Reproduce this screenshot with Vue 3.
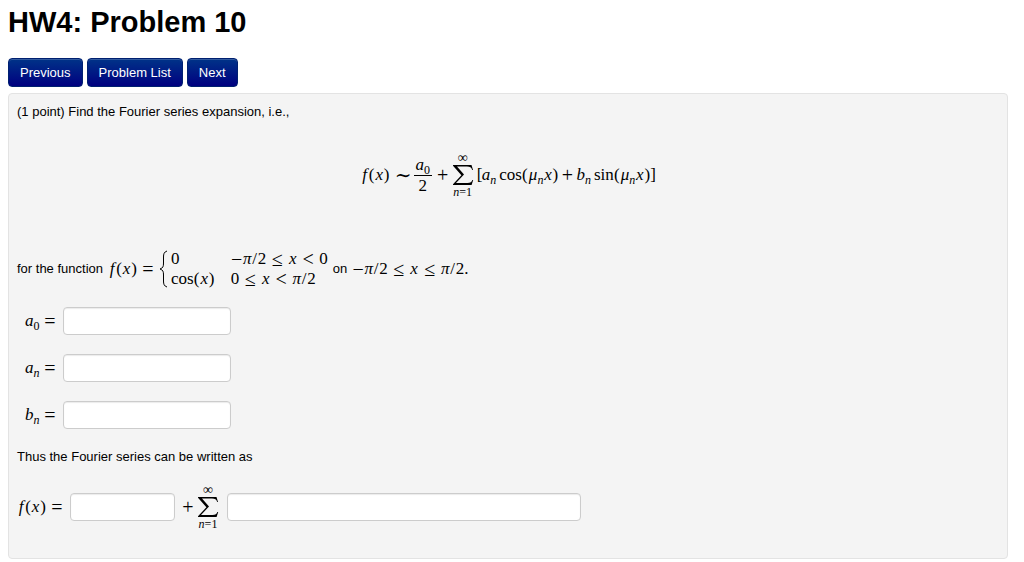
<script setup>
import { ref } from 'vue'

const coefficients = [
  { id: 'a0', letter: 'a', index: '0', variable: false },
  { id: 'an', letter: 'a', index: 'n', variable: true },
  { id: 'bn', letter: 'b', index: 'n', variable: true }
]
const answers = ref({ a0: '', an: '', bn: '', constant: '', terms: '' })
</script>

<template>
  <main class="page">
    <h1>HW4: Problem 10</h1>

    <nav class="buttons" aria-label="Problem navigation">
      <button type="button">Previous</button>
      <button type="button">Problem List</button>
      <button type="button">Next</button>
    </nav>

    <form class="panel" @submit.prevent>
      <p>(1 point) Find the Fourier series expansion, i.e.,</p>

      <div class="math display">
        <i class="f">f</i><span class="par">(</span><i class="x">x</i><span class="par">)</span>
        <span class="op rel">∼</span>
        <span class="frac"><span><i>a</i><sub>0</sub></span><span class="den">2</span></span>
        <span class="op bin">+</span>
        <span class="sum">
          <span class="limit inf">∞</span>
          <svg viewBox="0 0 22 22" aria-label="sum"><path d="M1 1H19.5L21 6H20.2C19.4 3.4 18 2.5 15 2.5H5L12 10.5L4 19H15.5C18.4 19 19.8 18 20.4 16H21.2L19.6 21H1V20.2L9.4 11.3L1 1.8Z" /></svg>
          <span class="limit"><i>n</i>=1</span>
        </span>
        <span class="bracket open">[</span><i class="var">a<sub>n</sub></i>
        <span class="fn">cos</span><span class="par">(</span><i class="mu">μ<sub>n</sub></i><i class="x">x</i><span class="par">)</span>
        <span class="op bin">+</span>
        <i class="var">b<sub>n</sub></i>
        <span class="fn">sin</span><span class="par">(</span><i class="mu">μ<sub>n</sub></i><i class="x">x</i><span class="par">)</span><span class="bracket">]</span>
      </div>

      <div class="line definition">
        <span>for the function</span>
        <span class="math">
          <i class="f">f</i><span class="par">(</span><i class="x">x</i><span class="par">)</span>
          <span class="op rel">=</span>
          <svg class="brace" viewBox="0 0 9 38" aria-label="cases"><path d="M8 1C5 2 4.5 4 4.5 7V13C4.5 16.5 4 18 1 19C4 20 4.5 21.5 4.5 25V31C4.5 34 5 36 8 37" /></svg>
          <span class="cases">
            <span class="math">0</span>
            <span class="math">
              <span class="op">−</span><i class="x">π</i><span class="slash">/</span>2<span class="op rel">≤</span><i class="x">x</i><span class="op rel">&lt;</span>0
            </span>
            <span class="math">cos<span class="par">(</span><i class="x">x</i><span class="par">)</span></span>
            <span class="math">
              0<span class="op rel">≤</span><i class="x">x</i><span class="op rel">&lt;</span><i class="x">π</i><span class="slash">/</span>2
            </span>
          </span>
        </span>
        <span class="on">on</span>
        <span class="math">
          <span class="op">−</span><i class="x">π</i><span class="slash">/</span>2<span class="op rel">≤</span><i class="x">x</i><span class="op rel">≤</span><i class="x">π</i><span class="slash">/</span>2.
        </span>
      </div>

      <div class="answers">
        <div v-for="c in coefficients" :key="c.id" class="answer">
          <label class="math" :for="c.id">
            <span class="name"><i>{{ c.letter }}</i><sub><i v-if="c.variable">{{ c.index }}</i><template v-else>{{ c.index }}</template></sub></span>
            <span class="op rel">=</span>
          </label>
          <input :id="c.id" v-model="answers[c.id]" type="text" />
        </div>
      </div>

      <p>Thus the Fourier series can be written as</p>

      <div class="series">
        <label class="math" for="constant">
          <i class="f">f</i><span class="par">(</span><i class="x">x</i><span class="par">)</span><span class="op rel">=</span>
        </label>
        <input id="constant" v-model="answers.constant" class="constant" type="text" />
        <label class="math series-sum" for="terms">
          <span class="op bin">+</span>
          <span class="sum">
            <span class="limit inf">∞</span>
            <svg viewBox="0 0 22 22" aria-label="sum"><path d="M1 1H19.5L21 6H20.2C19.4 3.4 18 2.5 15 2.5H5L12 10.5L4 19H15.5C18.4 19 19.8 18 20.4 16H21.2L19.6 21H1V20.2L9.4 11.3L1 1.8Z" /></svg>
            <span class="limit"><i>n</i>=1</span>
          </span>
        </label>
        <input id="terms" v-model="answers.terms" class="terms" type="text" />
      </div>
    </form>
  </main>
</template>

<style>
body {
  background: #fff;
}
</style>

<style scoped>
.page {
  padding: 2px 16px 0 8px;
  font: 13px/20px "Liberation Sans", Arial, sans-serif;
  color: #000;
}

h1 {
  margin: 0 0 16px;
  font-size: 29px;
  line-height: 40px;
}

.buttons {
  display: flex;
  gap: 4px;
  margin-bottom: 6px;
}

button {
  padding: 3px 11px;
  border: 1px solid #002070;
  border-radius: 4px;
  background: linear-gradient(#003388, #000080);
  box-shadow: inset 0 1px 0 rgba(255, 255, 255, 0.2);
  color: #fff;
  font: inherit;
  line-height: 21px;
}

.panel {
  padding: 8px 8px 28px;
  border: 1px solid #e3e3e3;
  border-radius: 4px;
  background: #f4f4f4;
}

p {
  margin: 0;
}

.line,
.series,
.answer {
  display: flex;
  align-items: center;
}

.math {
  display: flex;
  align-items: center;
  font: 17px/20px "Liberation Serif", "DejaVu Serif", serif;
  white-space: nowrap;
}

.display {
  justify-content: center;
  margin: 30px 0 51px;
}

.f { width: 8px; text-align: center; }
.x { width: 9px; text-align: center; }
.par { width: 6px; text-align: center; }
.slash { width: 6px; text-align: center; }
.bracket { width: 5px; text-align: center; }
.open { margin-left: 3px; }
.mu { padding-left: 1px; }
.fn { padding-left: 3px; }

.op {
  width: 12px;
  font-size: 20px;
  text-align: center;
}

.rel { margin: 0 5px; }
.bin { margin: 0 3px; }

sub {
  font-size: 12px;
  line-height: 0;
}

.frac {
  display: flex;
  flex-direction: column;
  align-items: center;
  width: 18px;
  margin: 0 2px;
}

.den {
  align-self: stretch;
  border-top: 1px solid #000;
  text-align: center;
}

.sum {
  display: flex;
  flex-direction: column;
  align-items: center;
  width: 22px;
}

.sum svg {
  width: 22px;
  height: 22px;
}

.limit {
  font-size: 12px;
  line-height: 12px;
}

.inf {
  font-size: 14px;
}

.definition {
  min-height: 40px;
  gap: 5px;
}

.brace {
  width: 9px;
  height: 38px;
  margin-right: 3px;
  fill: none;
  stroke: #000;
}

.cases {
  display: grid;
  grid-template-columns: auto auto;
  column-gap: 16px;
}

.answers {
  display: grid;
  gap: 19px;
  margin: 18px 0;
  padding-left: 8px;
}

.name {
  width: 14px;
}

.answer label {
  width: 38px;
}

input {
  box-sizing: border-box;
  width: 168px;
  height: 28px;
  padding: 4px 6px;
  border: 1px solid #ccc;
  border-radius: 4px;
  background: #fff;
  box-shadow: inset 0 1px 1px rgba(0, 0, 0, 0.08);
  font: inherit;
}

.series {
  margin-top: 17px;
}

.series .constant {
  width: 105px;
  margin-left: 2px;
}

.series-sum {
  margin: 0 8px 0 4px;
}

.series .terms {
  width: 354px;
}
</style>
